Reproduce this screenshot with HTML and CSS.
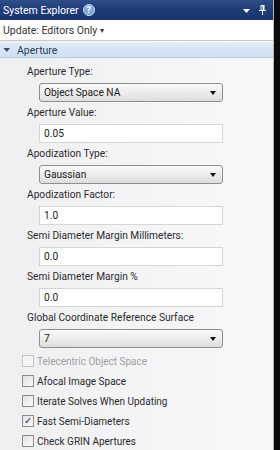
FILE: index.html
```html
<!DOCTYPE html>
<html lang="en">
<head>
    <meta charset="UTF-8">
    <title>System Explorer</title>
    <link rel="stylesheet" href="styles.css">
</head>
<body>
<div class="panel">
    <div class="titlebar">
        <span class="title">System Explorer</span>
        <span class="help">?</span>
        <span class="spacer"></span>
        <svg class="tb-icon" width="9" height="9" viewBox="0 0 9 9"><path d="M1 3 L8 3 L4.5 7 Z" fill="#fff"/></svg>
        <svg class="tb-icon" width="9" height="12" viewBox="0 0 9 12"><path d="M2.5 1 H6.5 V6 H8 V7 H5 V11 H4 V7 H1 V6 H2.5 Z M3.5 2 V6 H4.5 V2 Z" fill="#fff"/></svg>
    </div>

    <div class="update">Update: Editors Only <span class="caret">&#9662;</span></div>

    <div class="section-head">
        <svg width="8" height="8" viewBox="0 0 8 8"><path d="M0.5 2 L7 2 L3.75 6 Z" fill="#3b4f6b"/></svg>
        <span>Aperture</span>
    </div>

    <div class="section-body">
        <div class="field">
            <div class="label">Aperture Type:</div>
            <div class="select">Object Space NA<span class="arrow"></span></div>
        </div>
        <div class="field">
            <div class="label">Aperture Value:</div>
            <div class="input">0.05</div>
        </div>
        <div class="field">
            <div class="label">Apodization Type:</div>
            <div class="select">Gaussian<span class="arrow"></span></div>
        </div>
        <div class="field">
            <div class="label">Apodization Factor:</div>
            <div class="input">1.0</div>
        </div>
        <div class="field">
            <div class="label">Semi Diameter Margin Millimeters:</div>
            <div class="input">0.0</div>
        </div>
        <div class="field">
            <div class="label">Semi Diameter Margin %</div>
            <div class="input">0.0</div>
        </div>
        <div class="field">
            <div class="label">Global Coordinate Reference Surface</div>
            <div class="select">7<span class="arrow"></span></div>
        </div>

        <div class="checks">
            <div class="check disabled"><span class="box"></span>Telecentric Object Space</div>
            <div class="check"><span class="box"></span>Afocal Image Space</div>
            <div class="check"><span class="box"></span>Iterate Solves When Updating</div>
            <div class="check"><span class="box checked">&#10003;</span>Fast Semi-Diameters</div>
            <div class="check"><span class="box"></span>Check GRIN Apertures</div>
        </div>
    </div>
</div>
</body>
</html>
```

FILE: styles.css
```css
* {
    box-sizing: border-box;
    margin: 0;
    padding: 0;
}

body {
    background: #0c0c0c;
    font-family: Roboto, 'Noto Sans', sans-serif;
    font-size: 10.2px;
    color: #2b2b2b;
    width: 280px;
    height: 450px;
    overflow: hidden;
}

.panel {
    width: 274px;
    height: 450px;
    background: linear-gradient(90deg, #efeff1 0%, #f5f5f7 60%, #f8f8fa 100%);
    border-right: 1px solid #b9b9bd;
}

.titlebar {
    height: 20px;
    display: flex;
    align-items: center;
    padding: 0 6px 0 3px;
    background: linear-gradient(180deg, #2f4d8a 0%, #1f3c78 50%, #19346d 100%);
    color: #fff;
}

.title {
    font-size: 10.5px;
}

.help {
    width: 12px;
    height: 12px;
    margin-left: 4px;
    border-radius: 50%;
    background: #7fa6d8;
    border: 1px solid #c6d7ef;
    color: #fff;
    font-size: 9px;
    font-weight: bold;
    line-height: 10px;
    text-align: center;
}

.spacer {
    flex: 1;
}

.tb-icon {
    margin-left: 7px;
}

.update {
    height: 21px;
    display: flex;
    align-items: center;
    padding-left: 3px;
    background: #fff;
    border-bottom: 1px solid #c9c9cf;
    font-size: 10.5px;
    color: #333;
}

.caret {
    font-size: 8px;
    margin-left: 3px;
}

.section-head {
    height: 16px;
    margin-top: 1px;
    display: flex;
    align-items: center;
    gap: 6px;
    padding-left: 3px;
    background: linear-gradient(180deg, #dfeaf7 0%, #cddff2 100%);
    border-top: 1px solid #e9f0f9;
    border-bottom: 1px solid #b7cbe3;
    font-size: 10.5px;
    color: #2a3c55;
}

.section-body {
    padding: 6px 0 0 27px;
}

.field {
    margin-bottom: 3px;
}

.label {
    height: 16px;
    line-height: 16px;
    margin-bottom: 3px;
    white-space: nowrap;
}

.select,
.input {
    position: relative;
    width: 184px;
    height: 19px;
    margin-left: 12px;
    padding-left: 4px;
    line-height: 17px;
    color: #222;
}

.select {
    border: 1px solid #8e8e92;
    border-radius: 3px;
    background: linear-gradient(180deg, #fafafa 0%, #ececec 50%, #dedede 100%);
}

.input {
    border: 1px solid #d6d6da;
    background: #fff;
}

.arrow {
    position: absolute;
    right: 6px;
    top: 7px;
    border-left: 3px solid transparent;
    border-right: 3px solid transparent;
    border-top: 4px solid #111;
}

.checks {
    margin-top: 3px;
    margin-left: -5px;
}

.check {
    height: 20px;
    display: flex;
    align-items: center;
    gap: 3px;
    white-space: nowrap;
    font-size: 10px;
}

.box {
    width: 12px;
    height: 12px;
    border: 1px solid #8c8c90;
    background: linear-gradient(135deg, #e2e2e4 0%, #fafafa 100%);
    font-size: 10px;
    line-height: 10px;
    text-align: center;
    color: #1d2a55;
}

.check.disabled {
    color: #a0a0a4;
}

.check.disabled .box {
    border-color: #c4c4c8;
    background: #f4f4f6;
}
```
